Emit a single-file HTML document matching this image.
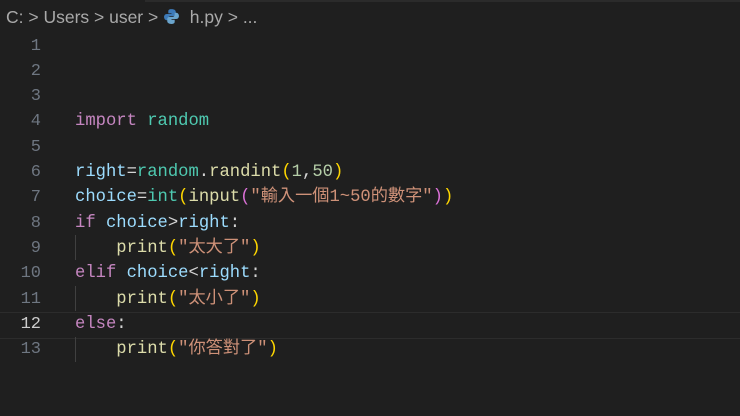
<!DOCTYPE html><html><head><style>
body{margin:0;width:740px;height:416px;background:#1f1f1f;overflow:hidden;position:relative;font-family:"Liberation Mono","Noto Sans CJK TC",monospace}
.bc{position:absolute;left:6px;top:7px;font:17.5px "Liberation Sans",sans-serif;color:#a9a9a9;white-space:pre}
.ln{position:absolute;left:0;width:41px;text-align:right;color:#6e7681;font-size:17px;line-height:25px;height:25px}
.cd{position:absolute;left:75px;font-size:17.2px;white-space:pre;color:#d4d4d4;line-height:25px;height:25px}
.k{color:#c586c0}.m{color:#4ec9b0}.v{color:#9cdcfe}.f{color:#dcdcaa}.s{color:#ce9178}.n{color:#b5cea8}.b{color:#ffd700}.p{color:#da70d6}
.g{position:absolute;left:75px;width:1px;background:#404040}
</style></head><body>
<div style="position:absolute;left:145px;top:0;width:595px;height:2px;background:#2b2b2b"></div>
<div class="bc">C: &gt; Users &gt; user &gt; <svg width="17" height="17" viewBox="0 0 16 16" style="vertical-align:-2px"><path d="M8 1c-3 0-3 1.3-3 2.5V5h3v.7H3.5C2 5.7 1 7 1 8.5s1 3 2.5 3H5V9.6c0-1 .9-2 2-2h3c1 0 2-.8 2-2V3.5C12 2 10.5 1 8 1z" fill="#3d7ab8"/><path d="M8 15c3 0 3-1.3 3-2.5V11H8v-.7h4.5c1.5 0 2.5-1.3 2.5-2.8s-1-3-2.5-3H11v1.9c0 1-.9 2-2 2H6c-1 0-2 .8-2 2v2.1C4 14 5.5 15 8 15z" fill="#6aa4cc"/></svg>  h.py &gt; ...</div>
<div style="position:absolute;left:0;right:0;top:312px;height:25px;border-top:1px solid #2c2c2c;border-bottom:1px solid #2c2c2c"></div>
<div class="g" style="top:235px;height:25px"></div>
<div class="g" style="top:286px;height:25px"></div>
<div class="g" style="top:337px;height:25px"></div>
<div id="c"></div>
<script>
var L=["","","",'<span class="k">import</span> <span class="m">random</span>',"",
'<span class="v">right</span>=<span class="m">random</span>.<span class="f">randint</span><span class="b">(</span><span class="n">1</span>,<span class="n">50</span><span class="b">)</span>',
'<span class="v">choice</span>=<span class="m">int</span><span class="b">(</span><span class="f">input</span><span class="p">(</span><span class="s">"輸入一個1~50的數字"</span><span class="p">)</span><span class="b">)</span>',
'<span class="k">if</span> <span class="v">choice</span>&gt;<span class="v">right</span>:',
'    <span class="f">print</span><span class="b">(</span><span class="s">"太大了"</span><span class="b">)</span>',
'<span class="k">elif</span> <span class="v">choice</span>&lt;<span class="v">right</span>:',
'    <span class="f">print</span><span class="b">(</span><span class="s">"太小了"</span><span class="b">)</span>',
'<span class="k">else</span>:',
'    <span class="f">print</span><span class="b">(</span><span class="s">"你答對了"</span><span class="b">)</span>'];
var h="";for(var i=0;i<13;i++){var t=33.5+i*25.33;h+='<div class="ln" style="top:'+(t)+'px;'+(i==11?'color:#ccc':'')+'">'+(i+1)+'</div><div class="cd" style="top:'+(t)+'px">'+L[i]+'</div>';}
document.getElementById("c").innerHTML=h;
</script></body></html>
